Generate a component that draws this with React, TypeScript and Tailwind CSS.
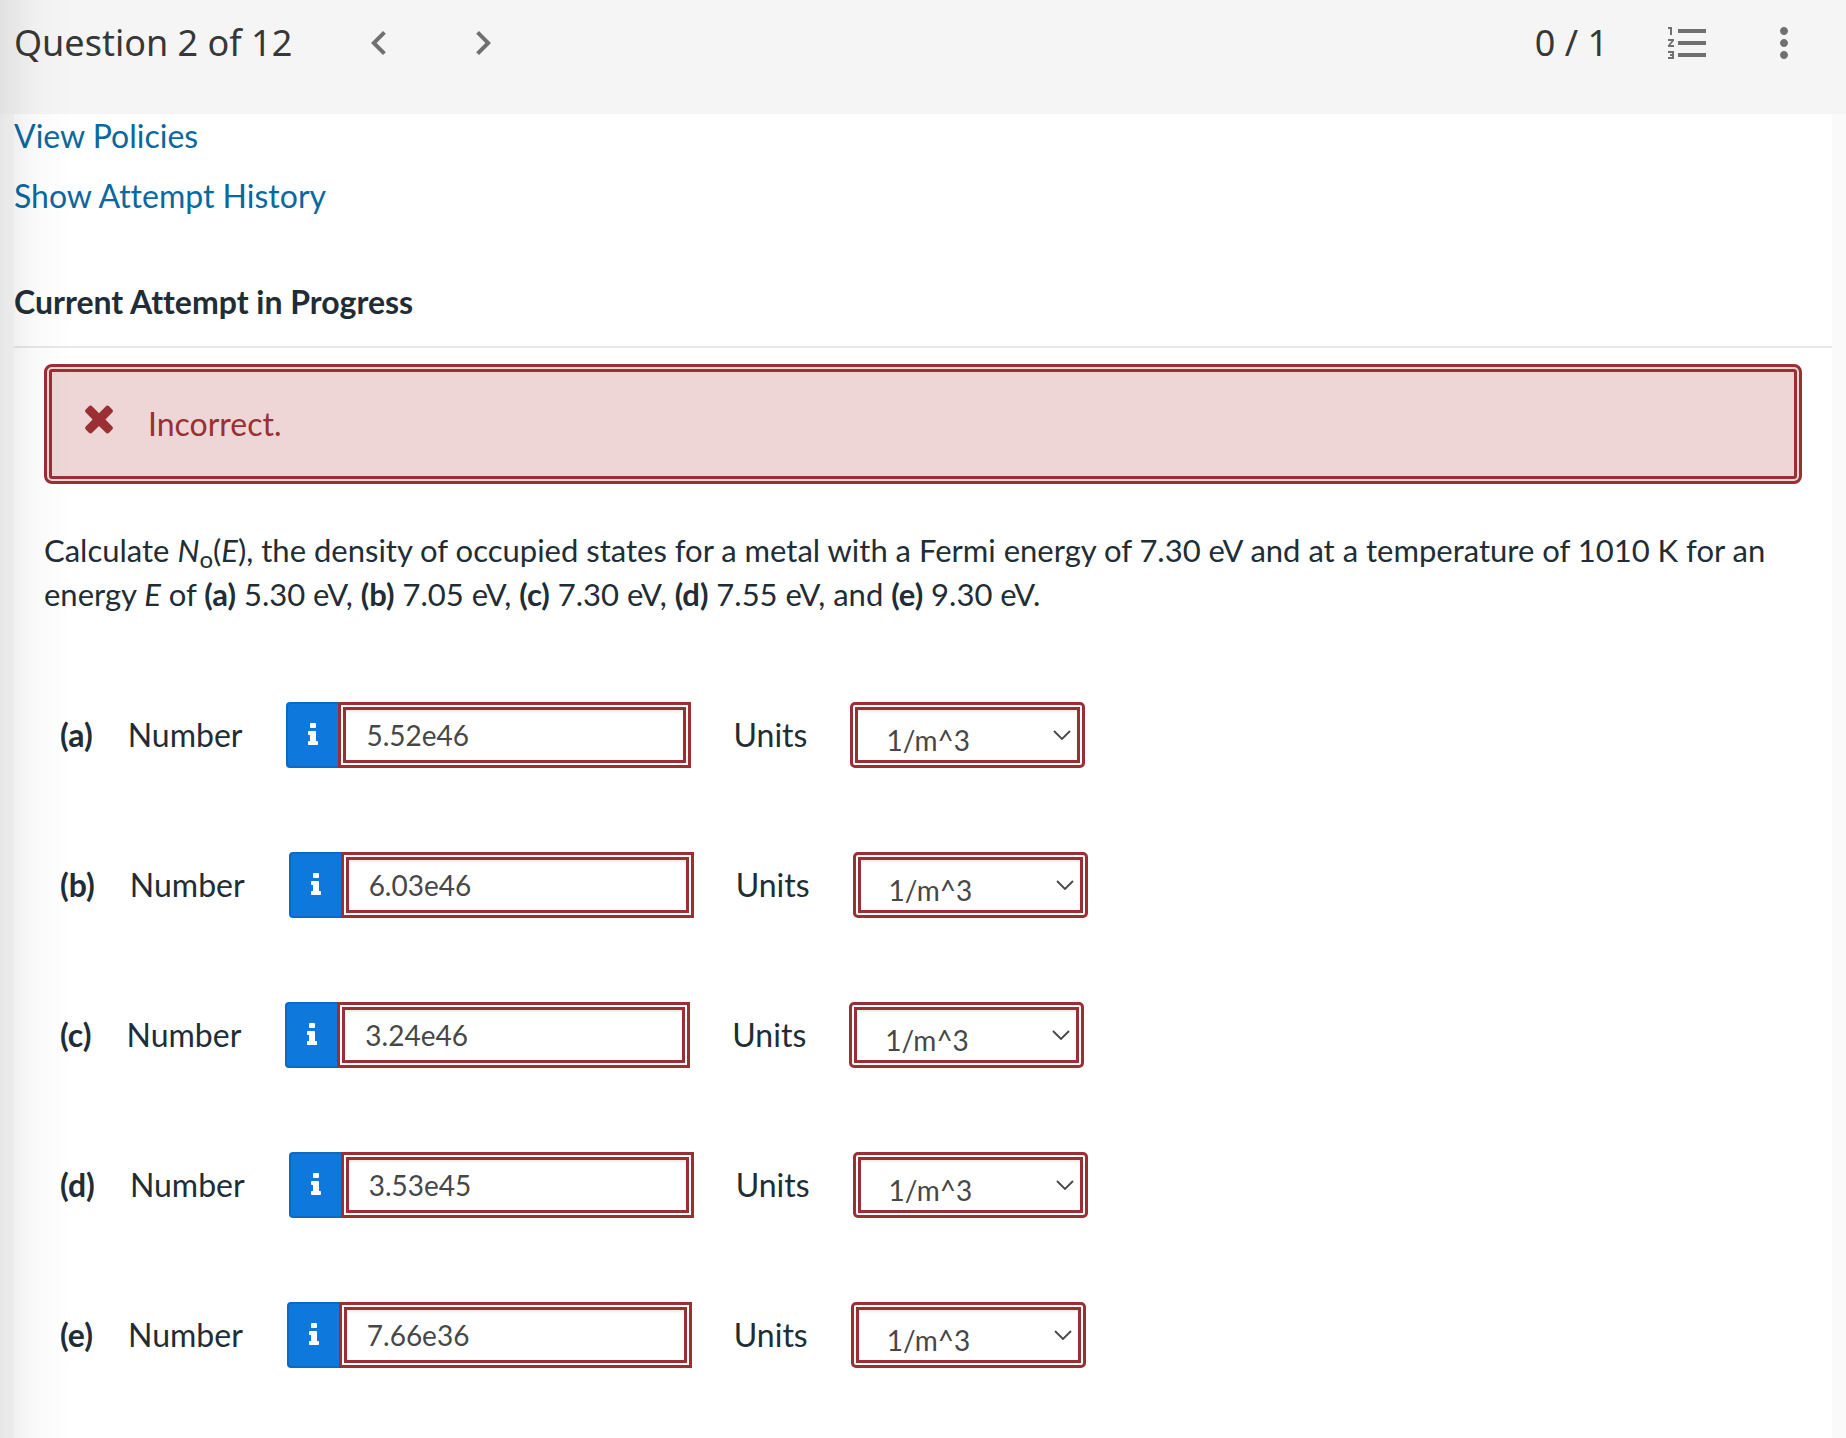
import {
  MdChevronLeft,
  MdChevronRight,
  MdFormatListNumbered,
  MdMoreVert,
} from 'react-icons/md'

interface AnswerPart {
  letter: string
  value: string
}

const ANSWER_PARTS: AnswerPart[] = [
  { letter: 'a', value: '5.52e46' },
  { letter: 'b', value: '6.03e46' },
  { letter: 'c', value: '3.24e46' },
  { letter: 'd', value: '3.53e45' },
  { letter: 'e', value: '7.66e36' },
]

function CrossIcon({ className }: { className?: string }) {
  return (
    <svg className={className} viewBox="0 0 1792 1792" fill="currentColor">
      <path d="M1490 1322q0 40-28 68l-136 136q-28 28-68 28t-68-28l-294-294-294 294q-28 28-68 28t-68-28l-136-136q-28-28-28-68t28-68l294-294-294-294q-28-28-28-68t28-68l136-136q28-28 68-28t68 28l294 294 294-294q28-28 68-28t68 28l136 136q28 28 28 68t-28 68l-294 294 294 294q28 28 28 68z" />
    </svg>
  )
}

function InfoIcon({ className }: { className?: string }) {
  return (
    <svg className={className} viewBox="0 0 1792 1792" fill="currentColor">
      <path d="M1216 1344v128q0 26-19 45t-45 19h-512q-26 0-45-19t-19-45v-128q0-26 19-45t45-19h64v-384h-64q-26 0-45-19t-19-45v-128q0-26 19-45t45-19h384q26 0 45 19t19 45v576h64q26 0 45 19t19 45zm-128-1152v192q0 26-19 45t-45 19h-256q-26 0-45-19t-19-45v-192q0-26 19-45t45-19h256q26 0 45 19t19 45z" />
    </svg>
  )
}

function QuestionHeader() {
  return (
    <header className="flex h-[114px] items-start justify-between bg-[#f5f5f5] pt-[19px] pr-[38px] pl-[14px] font-['Noto_Sans',sans-serif] text-[36px] leading-[48px] text-[#373737]">
      <div className="flex items-center">
        <h1>Question 2 of 12</h1>
        <nav className="ml-[63px] flex gap-14 text-[#707070]">
          <button type="button" aria-label="Previous question">
            <MdChevronLeft size={48} />
          </button>
          <button type="button" aria-label="Next question">
            <MdChevronRight size={48} />
          </button>
        </nav>
      </div>
      <div className="flex items-center text-[#707070]">
        <span className="text-[#373737]">0 / 1</span>
        <button className="ml-14" type="button" aria-label="Question list">
          <MdFormatListNumbered size={48} />
        </button>
        <button className="ml-12" type="button" aria-label="More options">
          <MdMoreVert size={48} />
        </button>
      </div>
    </header>
  )
}

function AnswerRow({ letter, value }: AnswerPart) {
  return (
    <div className="flex h-[66px] items-center">
      <span className="font-bold">({letter})</span>
      <label className="ml-[35px]" htmlFor={`number-${letter}`}>
        Number
      </label>
      <div className="ml-11 flex">
        <button
          className="flex h-[66px] w-[52px] items-center justify-center rounded-l-[4px] border-2 border-r-0 border-[#0d69c1] bg-[#0f78dc] text-white"
          type="button"
          aria-label={`Help for part ${letter}`}
        >
          <InfoIcon className="size-7" />
        </button>
        <input
          className="h-[66px] w-[353px] border-8 border-double border-[#9a2f34] bg-white px-5 text-[28px] text-[#474747] shadow-[inset_0_2px_2px_rgba(0,0,0,0.08)]"
          id={`number-${letter}`}
          type="text"
          defaultValue={value}
        />
      </div>
      <label className="ml-[42px]" htmlFor={`units-${letter}`}>
        Units
      </label>
      <div className="ml-[43px] grid items-center">
        <select
          className="col-start-1 row-start-1 h-[66px] w-[235px] appearance-none rounded-[5px] border-8 border-double border-[#9a2f34] bg-white pt-2 pl-7 text-[28px] text-[#474747] shadow-[inset_0_2px_2px_rgba(0,0,0,0.08)]"
          id={`units-${letter}`}
        >
          <option>1/m^3</option>
        </select>
        <svg
          className="pointer-events-none col-start-1 row-start-1 mr-3.5 h-[10px] w-[18px] justify-self-end"
          viewBox="0 0 18 10"
          fill="none"
          stroke="#474747"
          strokeWidth="1.8"
        >
          <path d="M1 1l8 8 8-8" />
        </svg>
      </div>
    </div>
  )
}

export default function App() {
  return (
    <div className="relative min-h-screen bg-[#fafafa] font-[Lato,sans-serif] text-[32px] leading-[44px] text-[#212d35] [font-variant-ligatures:none]">
      <QuestionHeader />

      <main className="mx-[14px] min-h-[calc(100vh-114px)] bg-white pb-[70px]">
        <div className="flex flex-col items-start gap-4 text-[#0a68a0]">
          <a href="#policies">View Policies</a>
          <a href="#history">Show Attempt History</a>
        </div>

        <h2 className="mt-[62px] border-b-2 border-[#e8e8e8] pb-[22px] font-bold">
          Current Attempt in Progress
        </h2>

        <section className="px-[30px] pt-4">
          <div
            className="flex h-[120px] items-center rounded-lg border-8 border-double border-[#9a2f34] bg-[#eed6d6] pl-[26px] text-[#9a2f34]"
            role="alert"
          >
            <CrossIcon className="mb-3 size-[42px]" />
            <span className="ml-7">Incorrect.</span>
          </div>

          <p className="mt-[44px] text-[31px]">
            Calculate <i>N</i>
            <sub className="text-[24px]">o</sub>(<i>E</i>), the density of
            occupied states for a metal with a Fermi energy of 7.30 eV and at a
            temperature of 1010 K for an energy <i>E</i> of <b>(a)</b> 5.30 eV,{' '}
            <b>(b)</b> 7.05 eV, <b>(c)</b> 7.30 eV, <b>(d)</b> 7.55 eV, and{' '}
            <b>(e)</b> 9.30 eV.
          </p>

          <div className="mt-[86px] flex flex-col gap-[84px] pl-4">
            {ANSWER_PARTS.map((part) => (
              <AnswerRow key={part.letter} {...part} />
            ))}
          </div>
        </section>
      </main>

      <div className="pointer-events-none absolute inset-y-0 left-0 w-[72px] bg-linear-to-r from-black/8 via-black/2 to-transparent" />
    </div>
  )
}
